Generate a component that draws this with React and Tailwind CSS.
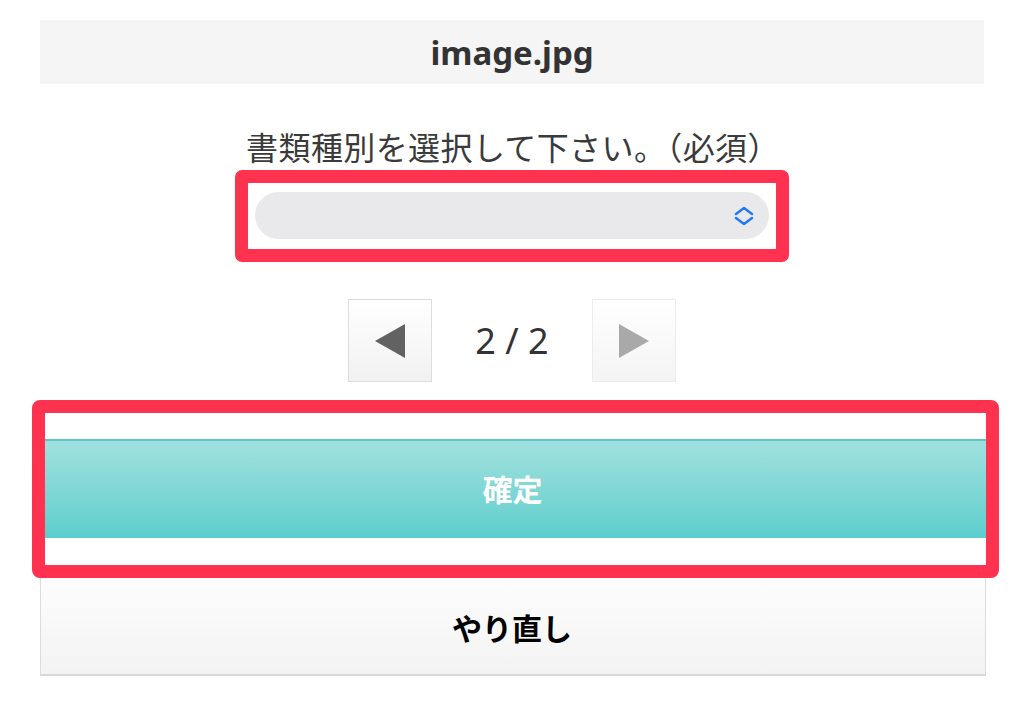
export default function App() {
  const font = { fontFamily: '"Noto Sans", "Noto Sans CJK JP", sans-serif' };
  return (
    <div className="w-[1024px] h-[728px] bg-white overflow-hidden flex flex-col" style={font}>
      <div className="mx-[40px] mt-[20px] h-[64px] bg-[#f5f5f5] flex items-center justify-center">
        <span className="text-[33px] font-bold text-[#333333] leading-none">image.jpg</span>
      </div>

      <div className="mt-[44px] h-[40px] flex items-center justify-center text-[32px] tracking-[0.4px] text-[#3a3a3a] leading-none">
        <span className="ml-[2px]">書類種別を選択して下さい。（必須）</span>
      </div>

      <div className="mt-[2px] mx-auto w-[554px] border-[13px] border-[#ff3350] rounded-[7px] px-[7px] pt-[9px] pb-[10px] bg-white">
        <div className="h-[47px] rounded-full bg-[#e9e9eb] flex items-center justify-end pr-[14px]">
          <svg width="22" height="22" viewBox="0 0 22 22" fill="none" stroke="#1f7bf2" strokeWidth="2.6" strokeLinecap="round" strokeLinejoin="round">
            <path d="M3 9 L11 3 L19 9" />
            <path d="M3 13 L11 19 L19 13" />
          </svg>
        </div>
      </div>

      <div className="mt-[37px] flex items-center justify-center">
        <div className="w-[84px] h-[83px] border border-[#dddddd] bg-gradient-to-b from-white to-[#f1f1f1] flex items-center justify-center">
          <svg width="30" height="34" viewBox="0 0 30 34">
            <polygon points="0,17 30,0 30,34" fill="#626262" />
          </svg>
        </div>
        <div className="w-[160px] text-center text-[36px] text-[#333333] leading-none">2 / 2</div>
        <div className="w-[84px] h-[83px] border border-[#ececec] bg-gradient-to-b from-white to-[#f4f4f4] flex items-center justify-center">
          <svg width="30" height="34" viewBox="0 0 30 34">
            <polygon points="30,17 0,0 0,34" fill="#a9a9a9" />
          </svg>
        </div>
      </div>

      <div className="mt-[18px] ml-[32px] w-[967px] border-[13px] border-[#ff3350] rounded-[8px] bg-white pt-[26px] pb-[27px] relative z-10">
        <div className="h-[99px] border-t-2 border-[#5ec6c6] bg-gradient-to-b from-[#a0e1de] to-[#5bcecd] flex items-center justify-center pr-[6px]">
          <span className="text-[30px] font-bold text-white leading-none">確定</span>
        </div>
      </div>

      <div className="ml-[40px] w-[946px] h-[98px] border-x border-b-2 border-x-[#dcdcdc] border-b-[#d9d9d9] bg-gradient-to-b from-[#fdfdfd] to-[#f3f3f3] flex items-center justify-center">
        <span className="text-[30px] font-bold text-black leading-none mt-[6px] mr-[2px]">やり直し</span>
      </div>
    </div>
  );
}
